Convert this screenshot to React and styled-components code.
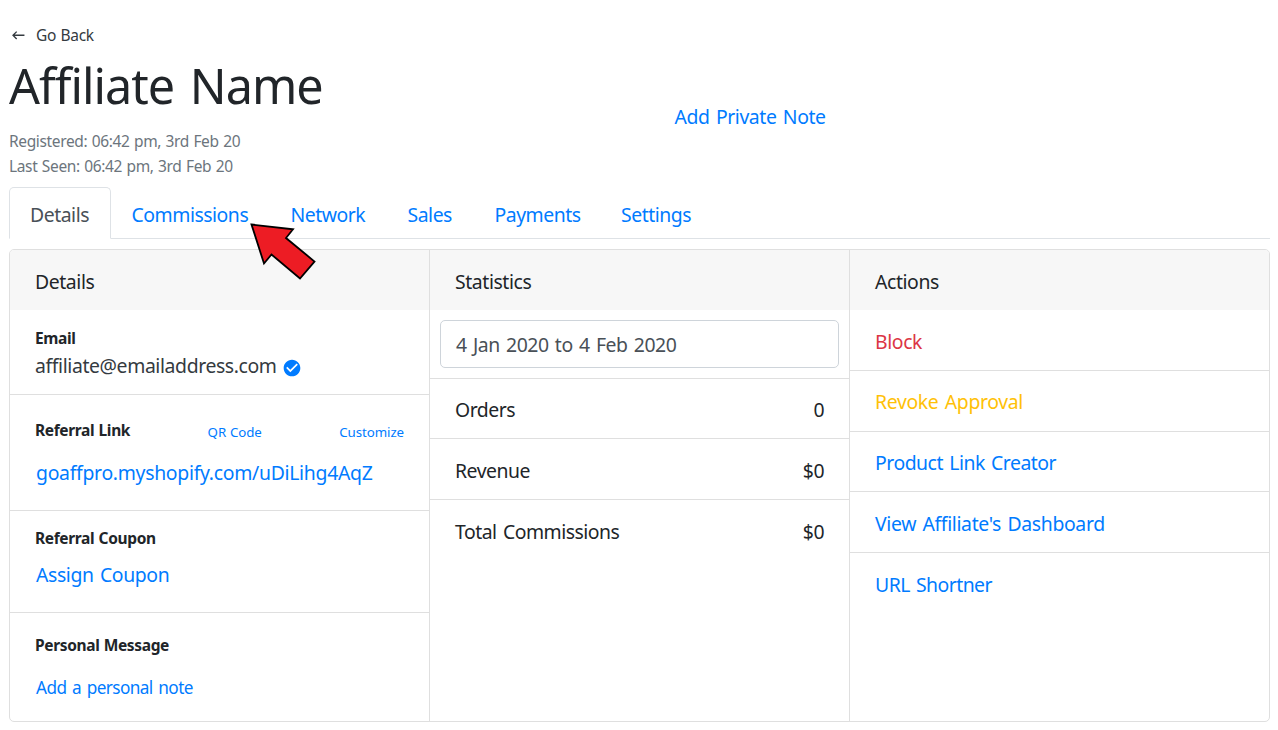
import React from "react";
import styled, { createGlobalStyle } from "styled-components";
import { MdCheckCircle, MdKeyboardBackspace } from "react-icons/md";

const Global = createGlobalStyle`
  * { box-sizing: border-box; }
  body {
    margin: 0;
    background: #fff;
    color: #212529;
    font-family: "Noto Sans", "Open Sans", sans-serif;
    font-size: 19.4px;
    letter-spacing: -0.025em;
    word-spacing: 0.09em;
    line-height: 30px;
  }
`;

const Page = styled.main`
  position: relative;
  width: 1278px;
  height: 730px;
  padding: 0 8px 0 9px;
  overflow: hidden;
`;

const Header = styled.header`
  display: flex;
  height: 187px;
`;

const Profile = styled.div`
  width: 665.5px;
  padding-top: 22px;
`;

const BackLink = styled.a`
  display: flex;
  align-items: center;
  gap: 9.5px;
  height: 25px;
  padding-left: 1px;
  font-size: 15.5px;
  letter-spacing: -0.018em;
  word-spacing: 0.04em;
  color: #343a40;
  svg { position: relative; top: 1px; }
`;

const Title = styled.h1`
  margin: 8px 0 14px;
  font-size: 48.5px;
  line-height: 60px;
  font-weight: 400;
  letter-spacing: -0.02em;
  word-spacing: 0.08em;
`;

const Meta = styled.div`
  font-size: 15.5px;
  line-height: 25px;
  letter-spacing: -0.023em;
  word-spacing: 0.05em;
  color: #6c757d;
`;

const Link = styled.a`
  color: ${(p) => p.$color || "#007bff"};
  font-size: ${(p) => p.$size || 19.4}px;
  letter-spacing: ${(p) => p.$track ?? -0.025}em;
  white-space: nowrap;
`;

const NoteArea = styled.div`
  padding-top: 102px;
`;

const Tabs = styled.nav`
  display: flex;
  height: 52px;
  letter-spacing: -0.024em;
  border-bottom: 1px solid #dee2e6;
`;

const Tab = styled.a`
  width: ${(p) => p.$width}px;
  height: 52px;
  padding: 12px 0 0 20px;
  border: 1px solid transparent;
  border-radius: 5px 5px 0 0;
  color: #007bff;
  ${(p) =>
    p.$active &&
    `color: #495057; background: #fff; border-color: #dee2e6 #dee2e6 #fff;`}
`;

const Card = styled.section`
  display: grid;
  grid-template-columns: 420px 420px 419px;
  height: 473px;
  margin-top: 10px;
  border: 1px solid #dfdfdf;
  border-radius: 5px;
  overflow: hidden;
`;

const Column = styled.div`
  border-right: 1px solid #dfdfdf;
  &:last-child { border-right: 0; }
`;

const ColumnHead = styled.div`
  height: 60px;
  padding: 17px 25px 0;
  background: #f7f7f7;
  letter-spacing: -0.021em;
`;

const Cell = styled.div`
  height: ${(p) => p.$height}px;
  padding: ${(p) => p.$top}px 25px 0;
  border-bottom: 1px solid #dfdfdf;
  &:last-child { border-bottom: 0; }
`;

const Line = styled.div`
  display: flex;
  align-items: center;
  justify-content: ${(p) => (p.$spread ? "space-between" : "flex-start")};
  gap: 6px;
  margin-top: ${(p) => p.$gap || 0}px;
  padding-left: ${(p) => p.$indent || 0}px;
`;

const Label = styled.strong`
  display: block;
  font-size: 15.5px;
  line-height: 24px;
  font-weight: 700;
  letter-spacing: -0.023em;
  word-spacing: 0.04em;
`;

const Small = styled(Link)`
  line-height: 20px;
  padding-top: 4px;
  word-spacing: 0.04em;
`;

const Email = styled.span`
  color: #343a40;
  letter-spacing: -0.02em;
`;

const Verified = styled(MdCheckCircle)`
  margin: 4px 0 0 -1px;
  color: #007bff;
`;

const DateCell = styled.div`
  height: 69px;
  padding: 10px;
  border-bottom: 1px solid #dfdfdf;
`;

const DateField = styled.div`
  height: 48px;
  padding: 9px 15px;
  border: 1px solid #ced4da;
  border-radius: 5px;
  color: #495057;
  letter-spacing: -0.024em;
`;

const Row = styled.div`
  display: flex;
  justify-content: space-between;
  height: ${(p) => p.$height}px;
  padding: ${(p) => p.$top || 17}px 25px 0;
  border-bottom: 1px solid #dfdfdf;
  &:last-child { border-bottom: 0; }
`;

const Pointer = styled.svg`
  position: absolute;
  left: 245px;
  top: 219px;
`;

const tabs = [
  ["Details", 101.5],
  ["Commissions", 159],
  ["Network", 117],
  ["Sales", 87],
  ["Payments", 126.5],
  ["Settings", 113],
];

const stats = [
  ["Orders", "0", 60, 16],
  ["Revenue", "$0", 61, 17],
  ["Total Commissions", "$0", 61, 17],
];

const actions = [
  ["Block", "#dc3545", 61, 17, -0.02],
  ["Revoke Approval", "#ffc107", 61, 16, -0.018],
  ["Product Link Creator", "#007bff", 60, 16],
  ["View Affiliate's Dashboard", "#007bff", 61, 17, -0.018],
  ["URL Shortner", "#007bff", 61, 17, -0.028],
];

export default function App() {
  return (
    <Page>
      <Global />
      <Header>
        <Profile>
          <BackLink>
            <MdKeyboardBackspace size={16.5} />
            <span>Go Back</span>
          </BackLink>
          <Title>Affiliate Name</Title>
          <Meta>Registered: 06:42 pm, 3rd Feb 20</Meta>
          <Meta>Last Seen: 06:42 pm, 3rd Feb 20</Meta>
        </Profile>
        <NoteArea>
          <Link $track={-0.021}>Add Private Note</Link>
        </NoteArea>
      </Header>

      <Tabs>
        {tabs.map(([name, width], i) => (
          <Tab key={name} $width={width} $active={i === 0}>
            {name}
          </Tab>
        ))}
      </Tabs>

      <Card>
        <Column>
          <ColumnHead>Details</ColumnHead>
          <Cell $height={85} $top={16}>
            <Label>Email</Label>
            <Line $gap={1}>
              <Email>affiliate@emailaddress.com</Email>
              <Verified size={20} />
            </Line>
          </Cell>
          <Cell $height={116} $top={23}>
            <Line $spread>
              <Label>Referral Link</Label>
              <Small $size={13.3} $track={-0.006}>QR Code</Small>
              <Small $size={13.3} $track={-0.006}>Customize</Small>
            </Line>
            <Line $gap={16} $indent={1}>
              <Link $track={-0.015}>goaffpro.myshopify.com/uDiLihg4AqZ</Link>
            </Line>
          </Cell>
          <Cell $height={102} $top={15}>
            <Label>Referral Coupon</Label>
            <Line $gap={10} $indent={1}>
              <Link $track={-0.02}>Assign Coupon</Link>
            </Line>
          </Cell>
          <Cell $height={108} $top={20}>
            <Label>Personal Message</Label>
            <Line $gap={16} $indent={1}>
              <Link $size={17.2} $track={-0.034}>Add a personal note</Link>
            </Line>
          </Cell>
        </Column>

        <Column>
          <ColumnHead>Statistics</ColumnHead>
          <DateCell>
            <DateField>4 Jan 2020 to 4 Feb 2020</DateField>
          </DateCell>
          {stats.map(([name, value, height, top]) => (
            <Row key={name} $height={height} $top={top}>
              <span>{name}</span>
              <span>{value}</span>
            </Row>
          ))}
        </Column>

        <Column>
          <ColumnHead>Actions</ColumnHead>
          {actions.map(([name, color, height, top, track]) => (
            <Row key={name} $height={height} $top={top}>
              <Link $color={color} $track={track}>{name}</Link>
            </Row>
          ))}
        </Column>
      </Card>

      <Pointer width="76" height="66" viewBox="0 0 76 66">
        <path
          d="M6.5 5.5L48 10.3L41 19L69.5 42.5L55 59.5L26.5 35.5L19 44.5Z"
          fill="#ed1c24"
          stroke="#000"
          strokeWidth="1.8"
        />
      </Pointer>
    </Page>
  );
}
